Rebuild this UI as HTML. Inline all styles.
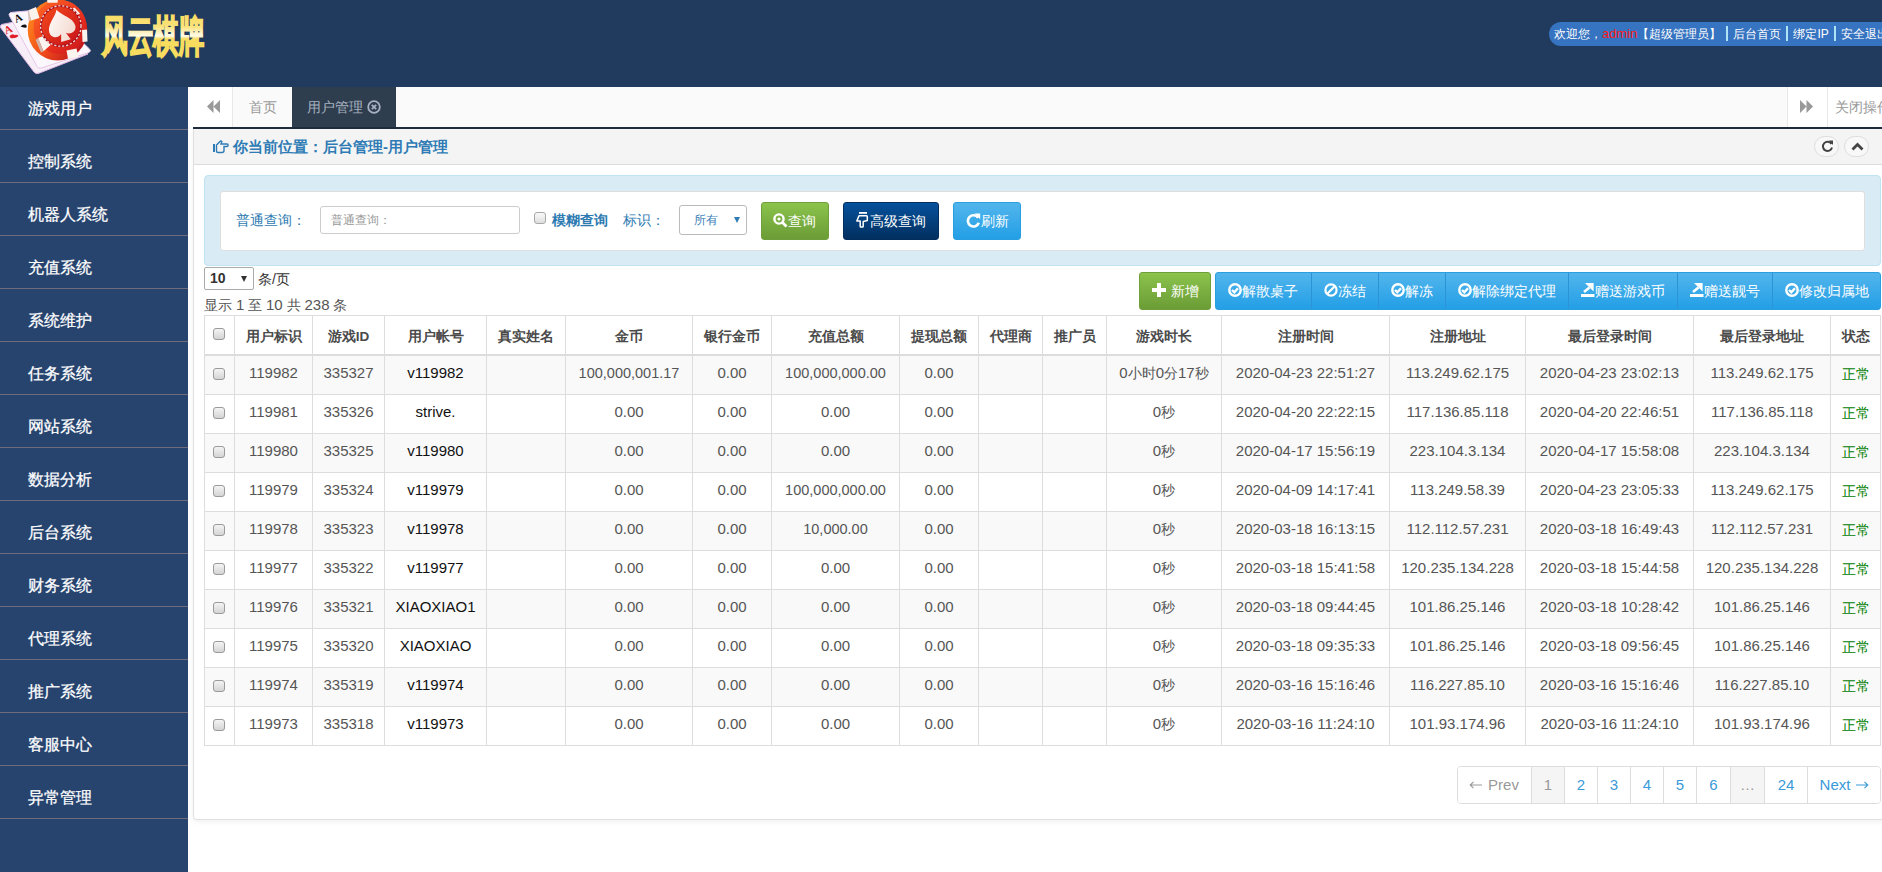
<!DOCTYPE html>
<html><head><meta charset="utf-8">
<style>
*{box-sizing:border-box}
body{margin:0;width:1882px;height:872px;overflow:hidden;position:relative;background:#fff;font-family:"Liberation Sans",sans-serif;font-size:14px;color:#555}
.abs{position:absolute}
#hdr{left:0;top:0;width:1882px;height:87px;background:#213b5f;z-index:2}
#side{left:0;top:77px;width:188px;height:795px;background:#27446f;z-index:1}
#side div{-webkit-text-stroke:0.25px #fff;height:53px;border-bottom:1px solid #6f6c7e;color:#fff;font-size:16px;line-height:40px;padding-top:12px;padding-left:28px;white-space:nowrap}
#tabs{left:188px;top:87px;width:1694px;height:42px;background:#fafafa}
#tabline{left:193px;top:127px;width:1689px;height:2px;background:#1e2c3d}
#panel{left:193px;top:129px;width:1700px;height:691px;border:1px solid #e0e0e0;border-top:0;border-radius:0 0 4px 4px;box-shadow:0 2px 5px rgba(0,0,0,.06)}
#phead{left:0;top:0;width:100%;height:36px;background:#f4f4f4;border-bottom:1px solid #dcdcdc}
#sbox{left:204px;top:175px;width:1677px;height:91px;background:#d9ebf5;border:1px solid #bfe3f3;border-radius:4px}
#sinner{left:220px;top:191px;width:1645px;height:60px;background:#fff;border:1px solid #dedede;border-radius:3px}
table{border-collapse:collapse;table-layout:fixed}
#tbl{left:204px;top:315px;width:1677px}
#tbl td,#tbl th{border:1px solid #ddd;text-align:center;padding:0;white-space:nowrap;overflow:hidden}
#tbl th{height:39px;font-weight:bold;color:#4a4a4a;padding-top:4px;font-size:13.5px;border-bottom:2px solid #ddd}
#tbl td{height:39px;font-size:15px;line-height:18px;padding-bottom:4px}
#tbl td .c{font-size:14px}
#tbl tbody tr:first-child td{height:40px;padding-bottom:4px}
#tbl tbody tr:nth-child(odd) td{background:#f9f9f9}
#tbl td.acc{color:#111}
#tbl td.ok{color:#008000}
#tbl td.ok .c{position:relative;top:1px}
#tbl th .cb{position:relative;top:-4px}
.cb{margin-left:-2px;display:inline-block;width:12px;height:12px;border:1px solid #9a9a9a;border-radius:3px;background:linear-gradient(#f4f4f4,#d4d4d4);vertical-align:middle}
.btn{position:absolute;color:#fff;border-radius:3px;font-size:14px;text-align:center;white-space:nowrap}
.pg{top:0;height:36px;font-size:15px;line-height:36px;text-align:center;white-space:nowrap}
</style></head><body>
<div id="hdr" class="abs">
<svg class="abs" style="left:0;top:0" width="100" height="87" viewBox="0 0 100 87">
<defs>
<linearGradient id="eg" x1="0" y1="0.2" x2="1" y2="0.8"><stop offset="0" stop-color="#ff8a1a"/><stop offset="0.5" stop-color="#f04a1c"/><stop offset="1" stop-color="#b80e1c"/></linearGradient>
<linearGradient id="fg" x1="0" y1="0" x2="1" y2="1"><stop offset="0" stop-color="#ff6a24"/><stop offset="0.6" stop-color="#e8301e"/><stop offset="1" stop-color="#c4121c"/></linearGradient>
<linearGradient id="ig" x1="0" y1="0" x2="1" y2="1"><stop offset="0" stop-color="#f24a1c"/><stop offset="1" stop-color="#c8101a"/></linearGradient>
<linearGradient id="sg" x1="0" y1="0" x2="1" y2="1"><stop offset="0" stop-color="#ffffff"/><stop offset="1" stop-color="#f3d3c8"/></linearGradient>
</defs>
<path d="M1.5 24.5 Q-0.5 26 0.8 28 L34 72 Q36 74.5 39 73.2 L88 54 L42 30 L14 22 Z" fill="#f7eef7" stroke="#dcb2df" stroke-width="1"/>
<path d="M10.5 12.5 Q8 14 9.5 16 L37 66.5 Q38.5 69 41.5 68 L89 52.5 Q91.5 51 89.5 49 L48 9 Z" fill="#fcf7fc" stroke="#e6c6e8" stroke-width="1"/>
<text x="16" y="23" font-size="11" font-weight="bold" fill="#111" font-family="Liberation Serif" transform="rotate(-24 16 23)">A</text>
<path d="M20.5 26.5 q2 -2.5 5 -2 q2 1 1 3 q-3 0.5 -6 -1 z" fill="#111"/>
<text x="6" y="34.5" font-size="11" font-weight="bold" fill="#e0202a" font-family="Liberation Serif" transform="rotate(-24 6 34.5)">A</text>
<path d="M9.5 36 q3 -3 5 -1 q3 -1 4 1 q-3 3 -8 2 z" fill="#e0202a"/>
<ellipse cx="57.5" cy="30" rx="29.8" ry="30.5" fill="url(#eg)"/>
<ellipse cx="60" cy="27" rx="26.5" ry="27" fill="url(#fg)"/>
<g fill="#faf3ee">
<path d="M47 -1 L58 -1 L57.5 2.8 L47.5 2.8 Z"/>
<path d="M71 9.5 L74.5 7.5 L80 13.5 L76.5 15.8 Z"/>
<path d="M82 30 L87 29.5 L87.5 41.5 L82.5 42 Z"/>
<path d="M66.5 50.5 L76.5 48.5 L78.5 57 L68 59 Z"/>
<path d="M38 38 L45 35.5 L50.6 45 L43.5 51.2 Z"/>
<path d="M29 10 L36 7 L39.5 18 L31 20.6 Z"/>
</g>
<path d="M38 38 L43.5 51.2 L41 52.5 L35.7 40 Z" fill="#cdb5ac"/>
<path d="M29 10 L31 20.6 L28.6 21 L27.8 12 Z" fill="#d9c4bc"/>
<circle cx="60.8" cy="26" r="21" fill="#a80c14"/>
<circle cx="60.8" cy="26" r="20.2" fill="none" stroke="#fff" stroke-opacity="0.85" stroke-width="1.3" stroke-dasharray="2.2 1.8"/>
<ellipse cx="60.8" cy="26" rx="19" ry="19" fill="url(#ig)"/>
<path d="M61 10.5 C58 17 49 21 49 29 C49 34 55 36.5 59 33 L57 40 L66 40 L63.5 33 C67.5 36.5 73.5 34 73.5 29 C73.5 21 64 17 61 10.5 Z" fill="url(#sg)" transform="translate(61 25.5) rotate(-16) scale(1.1) translate(-61 -25.5)"/>
</svg>
<svg class="abs" style="left:98px;top:10px" width="112" height="52" viewBox="0 0 112 52">
<defs><linearGradient id="yg" x1="0" y1="0" x2="0" y2="1"><stop offset="0" stop-color="#f8db5e"/><stop offset="0.3" stop-color="#f9e27a"/><stop offset="0.5" stop-color="#fffbea"/><stop offset="0.56" stop-color="#f8dc60"/><stop offset="1" stop-color="#f8dc60"/></linearGradient></defs>
<text x="4" y="41" font-size="43" font-weight="bold" fill="url(#yg)" stroke="url(#yg)" stroke-width="1.8" stroke-linejoin="miter" textLength="102" lengthAdjust="spacingAndGlyphs" font-family="Liberation Sans">风云棋牌</text>
</svg>
<div class="abs" style="left:1549px;top:22px;width:400px;height:24px;border-radius:12px;background:#3673c0;color:#fff;font-size:12px;line-height:24px;padding-left:5px;white-space:nowrap">欢迎您，<span style="color:#ff1a1a;font-size:13px">admin</span>【超级管理员】<span style="display:inline-block;width:2px;height:15px;background:#aee3f7;vertical-align:-3px;margin:0 5px 0 5px"></span>后台首页<span style="display:inline-block;width:2px;height:15px;background:#aee3f7;vertical-align:-3px;margin:0 5px"></span>绑定IP<span style="display:inline-block;width:2px;height:15px;background:#aee3f7;vertical-align:-3px;margin:0 5px"></span>安全退出</div>
</div>
<div id="side" class="abs">
<div>游戏用户</div><div>控制系统</div><div>机器人系统</div><div>充值系统</div><div>系统维护</div><div>任务系统</div><div>网站系统</div><div>数据分析</div><div>后台系统</div><div>财务系统</div><div>代理系统</div><div>推广系统</div><div>客服中心</div><div>异常管理</div>
</div>
<div id="tabs" class="abs">
<div class="abs" style="left:0;top:0;width:45px;height:40px;background:#fff;border-right:1px solid #e8e8e8"><svg class="abs" style="left:19px;top:13px" width="13" height="13" viewBox="0 0 13 13"><path d="M6.5 0 L0 6.5 L6.5 13 Z M13 0 L6.5 6.5 L13 13 Z" fill="#999"/></svg></div>
<div class="abs" style="left:45px;top:0;width:59px;height:40px;color:#999;font-size:14px;line-height:40px;text-align:center">首页</div>
<div class="abs" style="left:104px;top:0;width:104px;height:40px;background:#2f3e4e;color:#a7b1c2;font-size:14px;line-height:40px;padding-left:15px;white-space:nowrap">用户管理 <svg style="vertical-align:-2px" width="14" height="14" viewBox="0 0 14 14"><circle cx="7" cy="7" r="5.8" fill="none" stroke="#a7b1c2" stroke-width="1.8"/><path d="M4.8 4.8 L9.2 9.2 M9.2 4.8 L4.8 9.2" stroke="#a7b1c2" stroke-width="1.8"/></svg></div>
<div class="abs" style="left:1599px;top:0;width:40px;height:40px;background:#fff;border-left:1px solid #e8e8e8"><svg class="abs" style="left:12px;top:13px" width="13" height="13" viewBox="0 0 13 13"><path d="M0 0 L6.5 6.5 L0 13 Z M6.5 0 L13 6.5 L6.5 13 Z" fill="#999"/></svg></div>
<div class="abs" style="left:1639px;top:0;width:80px;height:40px;background:#fff;border-left:1px solid #e8e8e8;color:#999;font-size:14px;line-height:40px;padding-left:7px;white-space:nowrap">关闭操作</div>
</div>
<div id="tabline" class="abs"></div>
<div id="panel" class="abs"><div id="phead" class="abs"></div></div>
<svg class="abs" style="left:213px;top:140px" width="17" height="14" viewBox="0 0 17 14"><rect x="0" y="4" width="2" height="8" fill="#2e7bb5"/><path d="M3.5 5 L7 1.5 C7.5 0.8 8.5 0.8 8.8 1.6 L8 4 L14 4 C15.5 4 15.5 6.5 14 6.5 L11 6.5 L11 10.5 C11 12 10 12.5 9 12.5 L5 12.5 C4 12.5 3.5 12 3.5 11 Z" fill="none" stroke="#2e7bb5" stroke-width="1.4"/></svg>
<div class="abs" style="left:233px;top:137px;font-size:15px;font-weight:bold;color:#2e7bb5;line-height:20px;white-space:nowrap">你当前位置：后台管理-用户管理</div>
<div class="abs" style="left:1814px;top:136px;width:25px;height:21px;border:1px solid #ddd;border-radius:11px;background:#f8f8f8"><svg class="abs" style="left:6px;top:3px" width="13" height="13" viewBox="0 0 13 13"><path d="M10.5 4 A4.6 4.6 0 1 0 11 7.5" fill="none" stroke="#444" stroke-width="2"/><path d="M8 0.5 L12 0.5 L12 5 Z" fill="#444"/></svg></div>
<div class="abs" style="left:1844px;top:136px;width:25px;height:21px;border:1px solid #ddd;border-radius:11px;background:#f8f8f8"><svg class="abs" style="left:6px;top:4px" width="13" height="11" viewBox="0 0 13 11"><path d="M1.5 8.5 L6.5 3.5 L11.5 8.5" fill="none" stroke="#444" stroke-width="2.8"/></svg></div>
<div id="sbox" class="abs"></div>
<div id="sinner" class="abs"></div>
<div class="abs" style="left:236px;top:210px;font-size:14px;color:#2e7bb2;line-height:20px;white-space:nowrap">普通查询：</div>
<div class="abs" style="left:320px;top:206px;width:200px;height:28px;border:1px solid #ccc;border-radius:3px;background:#fff;color:#999;font-size:12px;line-height:26px;padding-left:10px;white-space:nowrap">普通查询：</div>
<div class="abs" style="left:534px;top:212px;width:12px;height:12px;border:1px solid #a8a8a8;border-radius:3px;background:linear-gradient(#fafafa,#dedede)"></div>
<div class="abs" style="left:552px;top:210px;font-size:14px;font-weight:bold;color:#2e7bb2;line-height:20px;white-space:nowrap">模糊查询</div>
<div class="abs" style="left:623px;top:210px;font-size:14px;color:#2e7bb2;line-height:20px;white-space:nowrap">标识：</div>
<div class="abs" style="left:679px;top:205px;width:68px;height:30px;border:1px solid #bbb;border-radius:3px;background:#fff;color:#3d80b8;font-size:12px;line-height:28px;padding-left:14px;white-space:nowrap">所有<svg class="abs" style="left:54px;top:11px" width="6" height="6" viewBox="0 0 6 6"><path d="M0 0 L6 0 L3 6 Z" fill="#2e7bb5"/></svg></div>
<div class="btn" style="left:761px;top:202px;width:68px;height:38px;background:linear-gradient(#8bc34c,#6b9c36);border:1px solid #6f9f3a;line-height:36px"><svg style="vertical-align:-2px;margin-left:-1px" width="15" height="15" viewBox="0 0 15 15"><circle cx="6" cy="6" r="4.6" fill="none" stroke="#fff" stroke-width="2.4"/><circle cx="6" cy="6" r="1.6" fill="#fff"/><path d="M9.2 9.2 L13.5 13.5" stroke="#fff" stroke-width="2.8"/></svg>查询</div>
<div class="btn" style="left:843px;top:202px;width:96px;height:38px;background:linear-gradient(#05519c,#022f5f);border:1px solid #022f5f;line-height:36px"><svg style="vertical-align:-2px" width="14" height="16" viewBox="0 0 14 16"><rect x="3" y="0" width="8" height="1.8" fill="#fff"/><path d="M3 3.8 L10.5 3.8 Q11.3 3.8 11.3 4.6 L11.3 8.6 L7.2 9.6 L7.2 14.2 Q7.2 15 6.4 15 L5 15 Q4.2 15 4.2 14.2 L4.2 9 L0.9 8.9 Z" fill="none" stroke="#fff" stroke-width="1.5" stroke-linejoin="round"/></svg>高级查询</div>
<div class="btn" style="left:953px;top:202px;width:68px;height:38px;background:linear-gradient(#52b5ec,#239fe6);border:1px solid #2a9fe0;line-height:36px"><svg style="vertical-align:-2px" width="15" height="15" viewBox="0 0 15 15"><path d="M12.2 4.8 A5.6 5.6 0 1 0 12.8 9.8" fill="none" stroke="#fff" stroke-width="2.6"/><path d="M8.5 0.5 L14.2 0.5 L14.2 6.2 Z" fill="#fff"/></svg>刷新</div>
<div class="abs" style="left:204px;top:267px;width:50px;height:23px;border:1px solid #aaa;border-radius:2px;background:#fff;color:#333;font-size:14px;font-weight:bold;line-height:21px;padding-left:5px">10<svg class="abs" style="left:36px;top:8px" width="6" height="6" viewBox="0 0 6 6"><path d="M0 0 L6 0 L3 6 Z" fill="#333"/></svg></div>
<div class="abs" style="left:258px;top:269px;font-size:14px;color:#333;line-height:20px;white-space:nowrap">条/页</div>
<div class="abs" style="left:204px;top:295px;font-size:14px;color:#555;line-height:20px;white-space:nowrap">显示 <span style="font-size:15px">1</span> 至 <span style="font-size:15px">10</span> 共 <span style="font-size:15px">238</span> 条</div>
<div class="btn" style="left:1139px;top:272px;width:72px;height:38px;background:linear-gradient(#8bc34c,#6b9c36);border:1px solid #6f9f3a;line-height:36px"><svg style="vertical-align:-1px;margin-right:5px" width="14" height="14" viewBox="0 0 14 14"><path d="M5 0 H9 V5 H14 V9 H9 V14 H5 V9 H0 V5 H5 Z" fill="#fff"/></svg>新增</div>
<div class="abs" style="left:1215px;top:272px;width:666px;height:38px;border-radius:3px;background:linear-gradient(#52b5ec,#239fe6);border:1px solid #2a9fe0"></div>
<div class="btn" style="left:1215px;top:273px;width:96px;height:36px;line-height:36px;border-radius:0"><svg style="vertical-align:-1px" width="14" height="14" viewBox="0 0 14 14"><circle cx="7" cy="7" r="5.7" fill="none" stroke="#fff" stroke-width="2.4"/><path d="M4 7 L6.3 9.2 L10 5.2" fill="none" stroke="#fff" stroke-width="2.4"/></svg>解散桌子</div>
<div class="btn" style="left:1311px;top:273px;width:67px;height:36px;line-height:36px;border-left:1px solid #2b93d6;border-radius:0"><svg style="vertical-align:-1px" width="14" height="14" viewBox="0 0 14 14"><circle cx="7" cy="7" r="5.6" fill="none" stroke="#fff" stroke-width="2.2"/><path d="M3.5 10.5 L10.5 3.5" stroke="#fff" stroke-width="2.2"/></svg>冻结</div>
<div class="btn" style="left:1378px;top:273px;width:67px;height:36px;line-height:36px;border-left:1px solid #2b93d6;border-radius:0"><svg style="vertical-align:-1px" width="14" height="14" viewBox="0 0 14 14"><circle cx="7" cy="7" r="5.7" fill="none" stroke="#fff" stroke-width="2.4"/><path d="M4 7 L6.3 9.2 L10 5.2" fill="none" stroke="#fff" stroke-width="2.4"/></svg>解冻</div>
<div class="btn" style="left:1445px;top:273px;width:123px;height:36px;line-height:36px;border-left:1px solid #2b93d6;border-radius:0"><svg style="vertical-align:-1px" width="14" height="14" viewBox="0 0 14 14"><circle cx="7" cy="7" r="5.7" fill="none" stroke="#fff" stroke-width="2.4"/><path d="M4 7 L6.3 9.2 L10 5.2" fill="none" stroke="#fff" stroke-width="2.4"/></svg>解除绑定代理</div>
<div class="btn" style="left:1568px;top:273px;width:109px;height:36px;line-height:36px;border-left:1px solid #2b93d6;border-radius:0"><svg style="vertical-align:-1px" width="14" height="14" viewBox="0 0 14 14"><path d="M0 11 H13.5 V14 H0 Z" fill="#fff"/><path d="M4 0 H12.6 V8.5 Z" fill="#fff"/><path d="M8.5 4.5 L3 9" stroke="#fff" stroke-width="2.6"/></svg>赠送游戏币</div>
<div class="btn" style="left:1677px;top:273px;width:95px;height:36px;line-height:36px;border-left:1px solid #2b93d6;border-radius:0"><svg style="vertical-align:-1px" width="14" height="14" viewBox="0 0 14 14"><path d="M0 11 H13.5 V14 H0 Z" fill="#fff"/><path d="M4 0 H12.6 V8.5 Z" fill="#fff"/><path d="M8.5 4.5 L3 9" stroke="#fff" stroke-width="2.6"/></svg>赠送靓号</div>
<div class="btn" style="left:1772px;top:273px;width:109px;height:36px;line-height:36px;border-left:1px solid #2b93d6;border-radius:0"><svg style="vertical-align:-1px" width="14" height="14" viewBox="0 0 14 14"><circle cx="7" cy="7" r="5.7" fill="none" stroke="#fff" stroke-width="2.4"/><path d="M4 7 L6.3 9.2 L10 5.2" fill="none" stroke="#fff" stroke-width="2.4"/></svg>修改归属地</div>
<table id="tbl" class="abs"><colgroup><col style="width:30px"><col style="width:78px"><col style="width:72px"><col style="width:102px"><col style="width:79px"><col style="width:127px"><col style="width:79px"><col style="width:128px"><col style="width:79px"><col style="width:64px"><col style="width:64px"><col style="width:115px"><col style="width:168px"><col style="width:136px"><col style="width:168px"><col style="width:137px"><col style="width:50px"></colgroup>
<thead><tr><th><span class="cb"></span></th><th>用户标识</th><th>游戏ID</th><th>用户帐号</th><th>真实姓名</th><th>金币</th><th>银行金币</th><th>充值总额</th><th>提现总额</th><th>代理商</th><th>推广员</th><th>游戏时长</th><th>注册时间</th><th>注册地址</th><th>最后登录时间</th><th>最后登录地址</th><th>状态</th></tr></thead><tbody>
<tr><td><span class="cb"></span></td><td>119982</td><td>335327</td><td class="acc">v119982</td><td></td><td style="font-size:14.5px">100,000,001.17</td><td>0.00</td><td style="font-size:14.5px">100,000,000.00</td><td>0.00</td><td></td><td></td><td>0<span class="c">小时</span>0<span class="c">分</span>17<span class="c">秒</span></td><td>2020-04-23 22:51:27</td><td>113.249.62.175</td><td>2020-04-23 23:02:13</td><td>113.249.62.175</td><td class="ok"><span class="c">正常</span></td></tr>
<tr><td><span class="cb"></span></td><td>119981</td><td>335326</td><td class="acc">strive.</td><td></td><td>0.00</td><td>0.00</td><td>0.00</td><td>0.00</td><td></td><td></td><td>0<span class="c">秒</span></td><td>2020-04-20 22:22:15</td><td>117.136.85.118</td><td>2020-04-20 22:46:51</td><td>117.136.85.118</td><td class="ok"><span class="c">正常</span></td></tr>
<tr><td><span class="cb"></span></td><td>119980</td><td>335325</td><td class="acc">v119980</td><td></td><td>0.00</td><td>0.00</td><td>0.00</td><td>0.00</td><td></td><td></td><td>0<span class="c">秒</span></td><td>2020-04-17 15:56:19</td><td>223.104.3.134</td><td>2020-04-17 15:58:08</td><td>223.104.3.134</td><td class="ok"><span class="c">正常</span></td></tr>
<tr><td><span class="cb"></span></td><td>119979</td><td>335324</td><td class="acc">v119979</td><td></td><td>0.00</td><td>0.00</td><td style="font-size:14.5px">100,000,000.00</td><td>0.00</td><td></td><td></td><td>0<span class="c">秒</span></td><td>2020-04-09 14:17:41</td><td>113.249.58.39</td><td>2020-04-23 23:05:33</td><td>113.249.62.175</td><td class="ok"><span class="c">正常</span></td></tr>
<tr><td><span class="cb"></span></td><td>119978</td><td>335323</td><td class="acc">v119978</td><td></td><td>0.00</td><td>0.00</td><td style="font-size:14.5px">10,000.00</td><td>0.00</td><td></td><td></td><td>0<span class="c">秒</span></td><td>2020-03-18 16:13:15</td><td>112.112.57.231</td><td>2020-03-18 16:49:43</td><td>112.112.57.231</td><td class="ok"><span class="c">正常</span></td></tr>
<tr><td><span class="cb"></span></td><td>119977</td><td>335322</td><td class="acc">v119977</td><td></td><td>0.00</td><td>0.00</td><td>0.00</td><td>0.00</td><td></td><td></td><td>0<span class="c">秒</span></td><td>2020-03-18 15:41:58</td><td>120.235.134.228</td><td>2020-03-18 15:44:58</td><td>120.235.134.228</td><td class="ok"><span class="c">正常</span></td></tr>
<tr><td><span class="cb"></span></td><td>119976</td><td>335321</td><td class="acc">XIAOXIAO1</td><td></td><td>0.00</td><td>0.00</td><td>0.00</td><td>0.00</td><td></td><td></td><td>0<span class="c">秒</span></td><td>2020-03-18 09:44:45</td><td>101.86.25.146</td><td>2020-03-18 10:28:42</td><td>101.86.25.146</td><td class="ok"><span class="c">正常</span></td></tr>
<tr><td><span class="cb"></span></td><td>119975</td><td>335320</td><td class="acc">XIAOXIAO</td><td></td><td>0.00</td><td>0.00</td><td>0.00</td><td>0.00</td><td></td><td></td><td>0<span class="c">秒</span></td><td>2020-03-18 09:35:33</td><td>101.86.25.146</td><td>2020-03-18 09:56:45</td><td>101.86.25.146</td><td class="ok"><span class="c">正常</span></td></tr>
<tr><td><span class="cb"></span></td><td>119974</td><td>335319</td><td class="acc">v119974</td><td></td><td>0.00</td><td>0.00</td><td>0.00</td><td>0.00</td><td></td><td></td><td>0<span class="c">秒</span></td><td>2020-03-16 15:16:46</td><td>116.227.85.10</td><td>2020-03-16 15:16:46</td><td>116.227.85.10</td><td class="ok"><span class="c">正常</span></td></tr>
<tr><td><span class="cb"></span></td><td>119973</td><td>335318</td><td class="acc">v119973</td><td></td><td>0.00</td><td>0.00</td><td>0.00</td><td>0.00</td><td></td><td></td><td>0<span class="c">秒</span></td><td>2020-03-16 11:24:10</td><td>101.93.174.96</td><td>2020-03-16 11:24:10</td><td>101.93.174.96</td><td class="ok"><span class="c">正常</span></td></tr>
</tbody></table>
<div class="abs" style="left:1457px;top:766px;width:424px;height:38px;border:1px solid #ddd;border-radius:4px;overflow:hidden;background:#fff">
<div class="abs pg" style="left:-1px;width:74px;background:#fff;color:#999"><svg style="vertical-align:1px;margin-right:6px" width="13" height="8" viewBox="0 0 13 8"><path d="M13 4 H1.5 M4.5 0.8 L1.2 4 L4.5 7.2" fill="none" stroke="#999" stroke-width="1.1"/></svg>Prev</div>
<div class="abs pg" style="left:73px;width:33px;border-left:1px solid #ddd;background:#f5f5f5;color:#999">1</div>
<div class="abs pg" style="left:106px;width:33px;border-left:1px solid #ddd;background:#fff;color:#3a9ad9">2</div>
<div class="abs pg" style="left:139px;width:33px;border-left:1px solid #ddd;background:#fff;color:#3a9ad9">3</div>
<div class="abs pg" style="left:172px;width:33px;border-left:1px solid #ddd;background:#fff;color:#3a9ad9">4</div>
<div class="abs pg" style="left:205px;width:33px;border-left:1px solid #ddd;background:#fff;color:#3a9ad9">5</div>
<div class="abs pg" style="left:238px;width:34px;border-left:1px solid #ddd;background:#fff;color:#3a9ad9">6</div>
<div class="abs pg" style="left:272px;width:34px;border-left:1px solid #ddd;background:#f5f5f5;color:#999">…</div>
<div class="abs pg" style="left:306px;width:43px;border-left:1px solid #ddd;background:#fff;color:#3a9ad9">24</div>
<div class="abs pg" style="left:349px;width:74px;border-left:1px solid #ddd;background:#fff;color:#3a9ad9">Next<svg style="vertical-align:1px;margin-left:6px" width="13" height="8" viewBox="0 0 13 8"><path d="M0 4 H11.5 M8.5 0.8 L11.8 4 L8.5 7.2" fill="none" stroke="#3a9ad9" stroke-width="1.1"/></svg></div>
</div>
</body></html>
